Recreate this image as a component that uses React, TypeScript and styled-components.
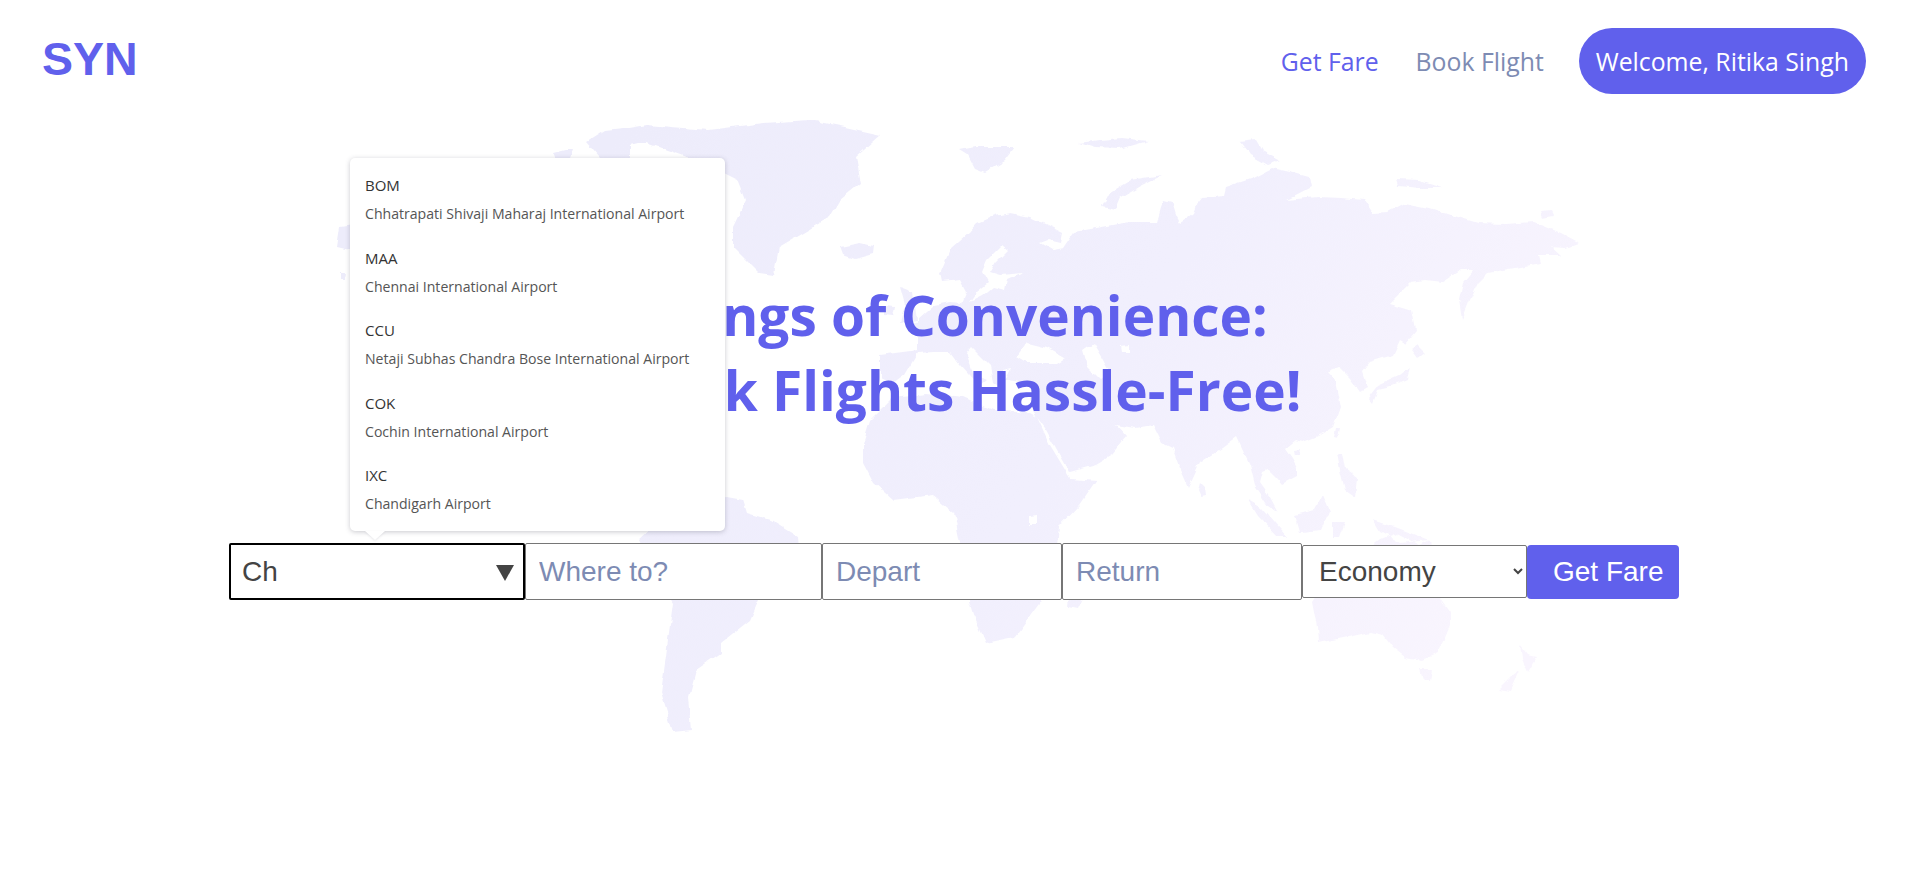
import React from "react";
import styled, { createGlobalStyle } from "styled-components";

const Global = createGlobalStyle`
  html, body { margin: 0; padding: 0; background: #fff; }
  * { box-sizing: border-box; }
`;

const brand = "#6060ec";
const sans = `"Open Sans", "Noto Sans", sans-serif`;
const arial = `"Liberation Sans", Arial, sans-serif`;

const Page = styled.div`
  position: relative;
  width: 100%;
  height: 876px;
  overflow: hidden;
  background: #fff;
`;
const MapLayer = styled.svg`
  position: absolute;
  inset: 0;
  width: 1920px;
  height: 876px;
`;
const Content = styled.div`
  position: relative;
  display: flex;
  flex-direction: column;
`;
const Header = styled.header`
  display: flex;
  align-items: center;
  justify-content: space-between;
  padding: 28px 54px 0 42px;
`;
const Logo = styled.div`
  font: 700 46.5px/54px ${arial};
  color: ${brand};
  margin-top: -5px;
`;
const Nav = styled.nav`
  display: flex;
  align-items: center;
  gap: 37px;
`;
const NavLink = styled.a<{ $muted?: boolean }>`
  font: 400 24.8px/34px ${sans};
  color: ${(p) => (p.$muted ? "#7d8bb3" : brand)};
`;
const Welcome = styled.button`
  height: 66px;
  margin-left: -2px;
  padding: 0 17px;
  border: 0;
  border-radius: 33px;
  background: ${brand};
  color: #fff;
  font: 400 24.8px/34px ${sans};
`;
const Title = styled.h1`
  margin: 183px 0 0;
  text-align: center;
  font: 700 55px/75px ${sans};
  color: ${brand};
`;
const Form = styled.form`
  display: flex;
  align-items: baseline;
  margin: 116px 0 0 229px;
`;
const Field = styled.div`
  position: relative;
  display: flex;
`;
const Input = styled.input<{ $w: number; $focused?: boolean }>`
  width: ${(p) => p.$w}px;
  height: 57px;
  padding: 0 ${(p) => (p.$focused ? 11 : 13)}px;
  background: #fff;
  border: ${(p) => (p.$focused ? "2px solid #000" : "1px solid #767676")};
  border-radius: 2px;
  outline: none;
  font: 400 28px ${arial};
  color: #444;
  &::placeholder { color: #7d8bb3; opacity: 1; }
`;
const Caret = styled.span`
  position: absolute;
  right: 11px;
  top: 22px;
  width: 0;
  height: 0;
  border-left: 9px solid transparent;
  border-right: 9px solid transparent;
  border-top: 16px solid #444;
`;
const Select = styled.select`
  width: 225px;
  height: 53px;
  padding: 0 0 0 12px;
  background: #fff;
  border: 1px solid #767676;
  border-radius: 2px;
  font: 400 28px ${arial};
  color: #444;
`;
const Submit = styled.button`
  width: 152px;
  height: 54px;
  padding: 0 11px 0 26px;
  border: 0;
  border-radius: 4px;
  background: ${brand};
  color: #fff;
  font: 400 28px ${arial};
  text-align: left;
  white-space: nowrap;
`;
const Suggestions = styled.ul`
  position: absolute;
  left: 121px;
  bottom: calc(100% + 12px);
  width: 375px;
  margin: 0;
  padding: 5.5px 0 5px;
  list-style: none;
  background: #fff;
  border-radius: 5px;
  box-shadow: 0 1px 5px rgba(60, 60, 80, 0.28);
  &::after {
    content: "";
    position: absolute;
    left: 15px;
    top: 100%;
    border-left: 10px solid transparent;
    border-right: 10px solid transparent;
    border-top: 9px solid #fff;
    filter: drop-shadow(0 1px 1px rgba(60, 60, 80, 0.12));
  }
`;
const Suggestion = styled.li`
  padding: 12.75px 15px;
`;
const Code = styled.div`
  font: 400 15px/19px ${sans};
  color: #333;
`;
const AirportName = styled.div`
  margin-top: 9px;
  font: 400 14.1px/19px ${sans};
  color: #555;
`;

const airports = [
  ["BOM", "Chhatrapati Shivaji Maharaj International Airport"],
  ["MAA", "Chennai International Airport"],
  ["CCU", "Netaji Subhas Chandra Bose International Airport"],
  ["COK", "Cochin International Airport"],
  ["IXC", "Chandigarh Airport"],
];

const land = [
  // Eurasia, clockwise from Norway
  "M940 273L950 250L969 233L978 223L995 216L1010 213L1030 217L1047 225L1063 233L1061 243L1048 240L1040 243L1052 250L1063 248L1074 232L1102 227L1130 222L1157 222L1161 208L1164 200L1172 202L1176 215L1180 223L1188 218L1194 213L1198 203L1203 197L1224 195L1226 187L1253 178L1272 168L1290 172L1309 177L1311 187L1286 200L1318 197L1341 198L1364 200L1373 213L1388 212L1405 203L1430 208L1451 215L1478 223L1505 224L1534 222L1561 233L1580 243L1566 248L1552 247L1561 255L1538 255L1540 263L1520 267L1488 273L1478 283L1470 300L1462 320L1459 300L1463 283L1474 270L1460 270L1442 282L1425 280L1410 282L1389 303L1412 310L1416 330L1405 343L1400 340L1393 355L1383 358L1370 362L1362 372L1367 388L1360 392L1350 378L1340 368L1327 373L1335 382L1337 392L1340 407L1333 427L1318 436L1303 442L1295 440L1285 448L1292 458L1297 467L1297 477L1282 485L1276 478L1268 470L1263 472L1260 483L1270 497L1278 512L1268 505L1255 485L1250 465L1237 437L1222 448L1200 462L1188 488L1180 470L1172 448L1162 443L1153 425L1135 428L1116 425L1127 437L1112 455L1095 465L1070 472L1056 448L1045 428L1033 412L1030 398L1034 386L1020 382L1006 380L1012 368L1003 370L1003 390L993 382L990 367L970 347L966 352L973 373L988 380L980 387L960 365L950 352L935 352L918 353L905 375L893 384L880 378L880 355L918 350L918 338L905 328L918 320L935 305L950 302L963 303L967 293L960 280L942 282Z",
  // inland waters
  "M1002 245L1008 250L996 262L990 272L1000 275L1023 273L1007 280L1005 290L993 287L982 296L970 302L977 292L988 283L982 272L987 260Z",
  "M1017 357L1027 343L1047 348L1065 358L1057 363L1027 363Z",
  "M1083 350L1093 343L1103 360L1110 373L1100 380L1088 368Z",
  "M1121 346L1129 345L1129 352L1122 352Z",
  // Britain and Ireland
  "M900 287L913 292L917 320L900 323L905 305Z",
  "M884 305L895 306L893 316L884 315Z",
  // Africa, with Lake Victoria as a hole
  "M863 443L870 420L893 397L927 393L963 397L993 410L1030 413L1037 417L1050 445L1070 478L1097 480L1080 505L1059 527L1056 555L1045 585L1040 603L1015 637L986 643L976 620L970 600L965 570L960 543L954 513L932 495L893 500L874 483L863 462Z",
  "M1029 516L1036 515L1036 525L1029 525Z",
  // Madagascar
  "M1082 575L1088 585L1078 608L1068 606L1070 590Z",
  // Greenland
  "M600 133L647 125L708 130L764 123L810 120L845 127L881 135L856 157L861 183L840 200L830 217L779 247L774 275L759 273L733 247L733 227L746 200L738 180L718 170L687 157L647 143L606 143Z",
  // Iceland
  "M840 247L860 243L874 246L873 254L855 259L843 255Z",
  // North America, mostly behind the list
  "M340 227L420 215L500 200L560 180L620 190L700 240L720 290L700 340L660 400L640 450L680 480L720 497L690 490L620 440L560 430L500 350L430 290L380 262L350 250L337 247Z",
  "M340 272L345 272L344 280L340 280Z",
  // South America
  "M727 497L743 500L747 513L770 520L798 537L800 560L780 585L759 600L750 620L721 643L721 653L696 670L689 697L692 730L673 732L661 693L667 647L673 603L655 575L638 540L660 520L695 505Z",
  // Australia
  "M1312 602L1330 575L1360 555L1380 540L1397 533L1420 545L1430 540L1440 598L1450 612L1450 625L1438 653L1423 660L1405 657L1393 648L1383 635L1370 632L1347 637L1318 643L1317 628Z",
  "M1420 670L1432 670L1430 680L1423 680Z",
  // New Zealand
  "M1520 645L1528 655L1537 657L1528 672L1522 658Z",
  "M1520 670L1510 692L1498 690L1513 675Z",
  // South-east Asia
  "M1248 500L1262 508L1287 537L1278 537L1258 516Z",
  "M1295 515L1315 510L1323 495L1330 512L1322 530L1300 532Z",
  "M1337 453L1342 453L1345 470L1357 478L1355 497L1345 490L1340 470Z",
  "M1332 523L1345 523L1340 537L1332 537Z",
  "M1373 520L1395 527L1430 540L1400 543L1380 532Z",
  "M1336 428L1340 428L1338 438L1334 437Z",
  "M1294 450L1301 449L1300 455L1295 455Z",
  // Sri Lanka
  "M1200 483L1205 488L1206 496L1201 497L1198 490Z",
  // Japan
  "M1410 367L1407 380L1390 387L1377 390L1372 403L1368 398L1378 385L1400 375Z",
  "M1411 350L1418 345L1425 352L1417 358Z",
  // Arctic islands
  "M960 150L975 147L1015 147L1005 160L985 172L975 168L968 155Z",
  "M1079 143L1100 140L1122 138L1148 141L1120 149L1095 148Z",
  "M1240 142L1256 140L1262 150L1281 160L1268 165L1250 155Z",
  "M1396 180L1420 181L1442 188L1420 188L1398 186Z",
  "M1540 212L1552 211L1554 215L1542 217Z",
  "M1102 207L1110 192L1130 180L1162 175L1140 186L1120 198L1115 210Z",
];

// Drawn on their own so that they merge with Greenland instead of cutting it.
const arcticCanada =
  "M586 142L605 130L623 128L650 128L650 140L630 145L630 158L600 158Z M553 153L565 150L573 150L570 158L555 158Z";

export default function App() {
  return (
    <Page>
      <Global />
      <MapLayer viewBox="0 0 1920 876" aria-hidden="true">
        <defs>
          <linearGradient id="landFill" gradientUnits="userSpaceOnUse" x1="600" y1="150" x2="1450" y2="680">
            <stop offset="0" stopColor="#edecfb" />
            <stop offset="0.55" stopColor="#f1effd" />
            <stop offset="1" stopColor="#f9f5fe" />
          </linearGradient>
          <filter id="coast" x="0" y="0" width="100%" height="100%" filterUnits="objectBoundingBox">
            <feTurbulence type="fractalNoise" baseFrequency="0.07" numOctaves="3" seed="4" />
            <feDisplacementMap in="SourceGraphic" scale="6" xChannelSelector="R" yChannelSelector="G" />
          </filter>
        </defs>
        <g filter="url(#coast)">
          <path d={arcticCanada} fill="url(#landFill)" />
          <path d={land.join(" ")} fill="url(#landFill)" fillRule="evenodd" />
        </g>
      </MapLayer>
      <Content>
        <Header>
          <Logo>SYN</Logo>
          <Nav>
            <NavLink>Get Fare</NavLink>
            <NavLink $muted>Book Flight</NavLink>
            <Welcome>Welcome, Ritika Singh</Welcome>
          </Nav>
        </Header>
        <Title>
          Wings of Convenience:
          <br />
          Book Flights Hassle-Free!
        </Title>
        <Form>
          <Field>
            <Input $w={296} $focused defaultValue="Ch" />
            <Caret />
            <Suggestions>
              {airports.map(([code, name]) => (
                <Suggestion key={code}>
                  <Code>{code}</Code>
                  <AirportName>{name}</AirportName>
                </Suggestion>
              ))}
            </Suggestions>
          </Field>
          <Input $w={297} placeholder="Where to?" />
          <Input $w={240} placeholder="Depart" />
          <Input $w={240} placeholder="Return" />
          <Select defaultValue="Economy">
            <option>Economy</option>
          </Select>
          <Submit type="button">Get Fare</Submit>
        </Form>
      </Content>
    </Page>
  );
}
